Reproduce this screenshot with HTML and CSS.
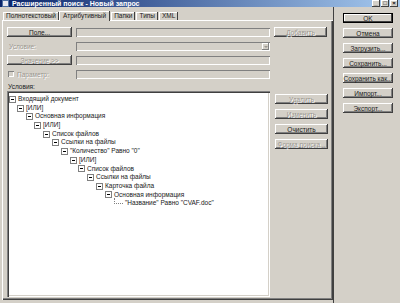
FILE: index.html
```html
<!DOCTYPE html>
<html>
<head>
    <title>Расширенный поиск - Новый запрос</title>
    <link rel="stylesheet" href="styles.css">
</head>
<body>
    <div class="window">
        <div class="titlebar">
            <span class="app-icon"></span>
            <span class="title">Расширенный поиск - Новый запрос</span>
            <div class="caption-buttons">
                <span class="cap-btn">_</span>
                <span class="cap-btn">□</span>
                <span class="cap-btn">×</span>
            </div>
        </div>

        <div class="content">
            <div class="main">
                <div class="tabs">
                    <span class="tab">Полнотекстовый</span>
                    <span class="tab active">Атрибутивный</span>
                    <span class="tab">Папки</span>
                    <span class="tab">Типы</span>
                    <span class="tab">XML</span>
                </div>

                <div class="panel">
                    <div class="form-grid">
                        <button class="btn">Поле...</button>
                        <div class="field"></div>
                        <button class="btn" disabled>Добавить</button>

                        <span class="label disabled">Условие:</span>
                        <div class="field combo"><span class="combo-arrow"></span></div>
                        <span></span>

                        <button class="btn" disabled>Значение &gt;&gt;</button>
                        <div class="field"></div>
                        <span></span>

                        <label class="check disabled"><span class="checkbox"></span>Параметр:</label>
                        <div class="field"></div>
                        <span></span>
                    </div>

                    <div class="label conditions-label">Условия:</div>

                    <div class="conditions">
                        <div class="tree">
                            <div class="node" style="padding-left: 2px"><span class="box"></span>Входящий документ</div>
                            <div class="node" style="padding-left: 10px"><span class="box"></span>[ИЛИ]</div>
                            <div class="node" style="padding-left: 19px"><span class="box"></span>Основная информация</div>
                            <div class="node" style="padding-left: 27px"><span class="box"></span>[ИЛИ]</div>
                            <div class="node" style="padding-left: 36px"><span class="box"></span>Список файлов</div>
                            <div class="node" style="padding-left: 45px"><span class="box"></span>Ссылки на файлы</div>
                            <div class="node" style="padding-left: 54px"><span class="box"></span>"Количество" Равно "0"</div>
                            <div class="node" style="padding-left: 63px"><span class="box"></span>[ИЛИ]</div>
                            <div class="node" style="padding-left: 71px"><span class="box"></span>Список файлов</div>
                            <div class="node" style="padding-left: 80px"><span class="box"></span>Ссылки на файлы</div>
                            <div class="node" style="padding-left: 89px"><span class="box"></span>Карточка файла</div>
                            <div class="node" style="padding-left: 98px"><span class="box"></span>Основная информация</div>
                            <div class="node" style="padding-left: 102px"><span class="leaf-line"></span>"Название" Равно "CVAF.doc"</div>
                        </div>
                        <div class="tree-buttons">
                            <button class="btn" disabled>Удалить</button>
                            <button class="btn" disabled>Изменить</button>
                            <button class="btn">Очистить</button>
                            <button class="btn" disabled>Форма поиска...</button>
                        </div>
                    </div>
                </div>
            </div>

            <div class="side">
                <button class="btn default">OK</button>
                <button class="btn">Отмена</button>
                <button class="btn">Загрузить...</button>
                <button class="btn">Сохранить...</button>
                <button class="btn">Сохранить как...</button>
                <button class="btn">Импорт...</button>
                <button class="btn">Экспорт...</button>
            </div>
        </div>
    </div>
</body>
</html>
```

FILE: styles.css
```css
body {
    margin: 0;
    font-family: "Liberation Sans", Arial, sans-serif;
    font-size: 6.5px;
    color: #202020;
    background: #d4d0c8;
}
.window {
    width: 400px;
    height: 303px;
    background: #d4d0c8;
    box-sizing: border-box;
    overflow: hidden;
    display: flex;
    flex-direction: column;
}
.titlebar {
    height: 11px;
    display: flex;
    align-items: center;
    padding: 0 2px;
    background: linear-gradient(to right, #0a246a, #a6caf0);
    color: white;
    font-weight: bold;
    font-size: 7px;
}
.app-icon {
    width: 7px;
    height: 7px;
    margin-right: 3px;
    background: #e8e8f0;
    border: 1px solid #5070a0;
    box-sizing: border-box;
}
.title {
    flex: 1;
}
.caption-buttons {
    display: flex;
    gap: 1px;
}
.cap-btn {
    width: 8px;
    height: 7px;
    font-size: 6px;
    line-height: 7px;
    text-align: center;
    color: black;
    background: #d4d0c8;
    box-shadow: inset -1px -1px #404040, inset 1px 1px #fff;
}
.content {
    flex: 1;
    display: flex;
}
.main {
    width: 331px;
    padding: 3px 0 3px 2px;
    display: flex;
    flex-direction: column;
}
.tabs {
    display: flex;
    height: 10px;
    align-items: flex-end;
    padding-left: 1px;
}
.tab {
    height: 8px;
    line-height: 8px;
    padding: 0 3px;
    margin-right: 1px;
    box-shadow: inset -1px 0 #404040, inset 1px 1px #fff;
}
.tab.active {
    height: 10px;
    line-height: 10px;
    margin: 0 1px 0 -1px;
    padding: 0 4px;
    background: #d4d0c8;
    position: relative;
    top: 1px;
    z-index: 1;
}
.panel {
    flex: 1;
    padding: 7px 3px 3px 5px;
    box-shadow: inset 1px 1px #fff, inset -1px -1px #404040, inset -2px -2px #808080;
}
.form-grid {
    display: grid;
    grid-template-columns: 65px 194px 53px;
    grid-template-rows: 10px 10px 10px 10px;
    column-gap: 4px;
    row-gap: 4px;
    align-items: center;
}
.btn {
    font-family: inherit;
    font-size: 6.5px;
    height: 10px;
    padding: 0;
    border: none;
    background: #d4d0c8;
    color: #202020;
    box-shadow: inset -1px -1px #404040, inset 1px 1px #fff, inset -2px -2px #808080;
}
.btn:disabled {
    color: #9a968f;
    text-shadow: 1px 1px #fff;
}
.btn.default {
    box-shadow: inset 0 0 0 1px #000, inset -2px -2px #404040, inset 2px 2px #fff;
}
.field {
    height: 9px;
    box-shadow: inset 1px 1px #808080, inset -1px -1px #fff;
    position: relative;
}
.combo-arrow {
    position: absolute;
    right: 1px;
    top: 1px;
    width: 7px;
    height: 7px;
    background: #d4d0c8;
    box-shadow: inset -1px -1px #808080, inset 1px 1px #fff;
}
.combo-arrow::after {
    content: "";
    position: absolute;
    left: 2px;
    top: 3px;
    border-left: 2px solid transparent;
    border-right: 2px solid transparent;
    border-top: 2px solid #9a968f;
}
.label {
    padding-left: 2px;
}
.disabled {
    color: #9a968f;
    text-shadow: 1px 1px #fff;
}
.check {
    display: flex;
    align-items: center;
    gap: 3px;
    padding-left: 1px;
}
.checkbox {
    width: 6px;
    height: 6px;
    background: #d4d0c8;
    box-shadow: inset 1px 1px #808080, inset -1px -1px #fff;
}
.conditions-label {
    margin-top: 4px;
    height: 8px;
    line-height: 8px;
    padding-left: 1px;
}
.conditions {
    display: flex;
    gap: 5px;
    height: 206px;
}
.tree {
    width: 263px;
    box-sizing: border-box;
    padding: 4px 0 3px;
    background: #fff;
    box-shadow: inset 1px 1px #808080, inset 2px 2px #404040, inset -1px -1px #fff, inset -2px -2px #d4d0c8;
}
.node {
    height: 8.7px;
    line-height: 8.7px;
    display: flex;
    align-items: center;
    white-space: nowrap;
}
.box {
    width: 7px;
    height: 7px;
    box-sizing: border-box;
    border: 1px solid #808080;
    margin-right: 2px;
    position: relative;
}
.box::after {
    content: "";
    position: absolute;
    left: 1px;
    top: 2px;
    width: 3px;
    height: 1px;
    background: #000;
}
.leaf-line {
    width: 8px;
    height: 5px;
    margin: -5px 2px 0 5px;
    border-left: 1px dotted #808080;
    border-bottom: 1px dotted #808080;
}
.tree-buttons {
    width: 53px;
    display: flex;
    flex-direction: column;
    gap: 5px;
    padding-top: 3px;
}
.side {
    flex: 1;
    display: flex;
    flex-direction: column;
    gap: 5px;
    padding: 6px 7px 0 9px;
    border-left: 1px solid #404040;
}
```
